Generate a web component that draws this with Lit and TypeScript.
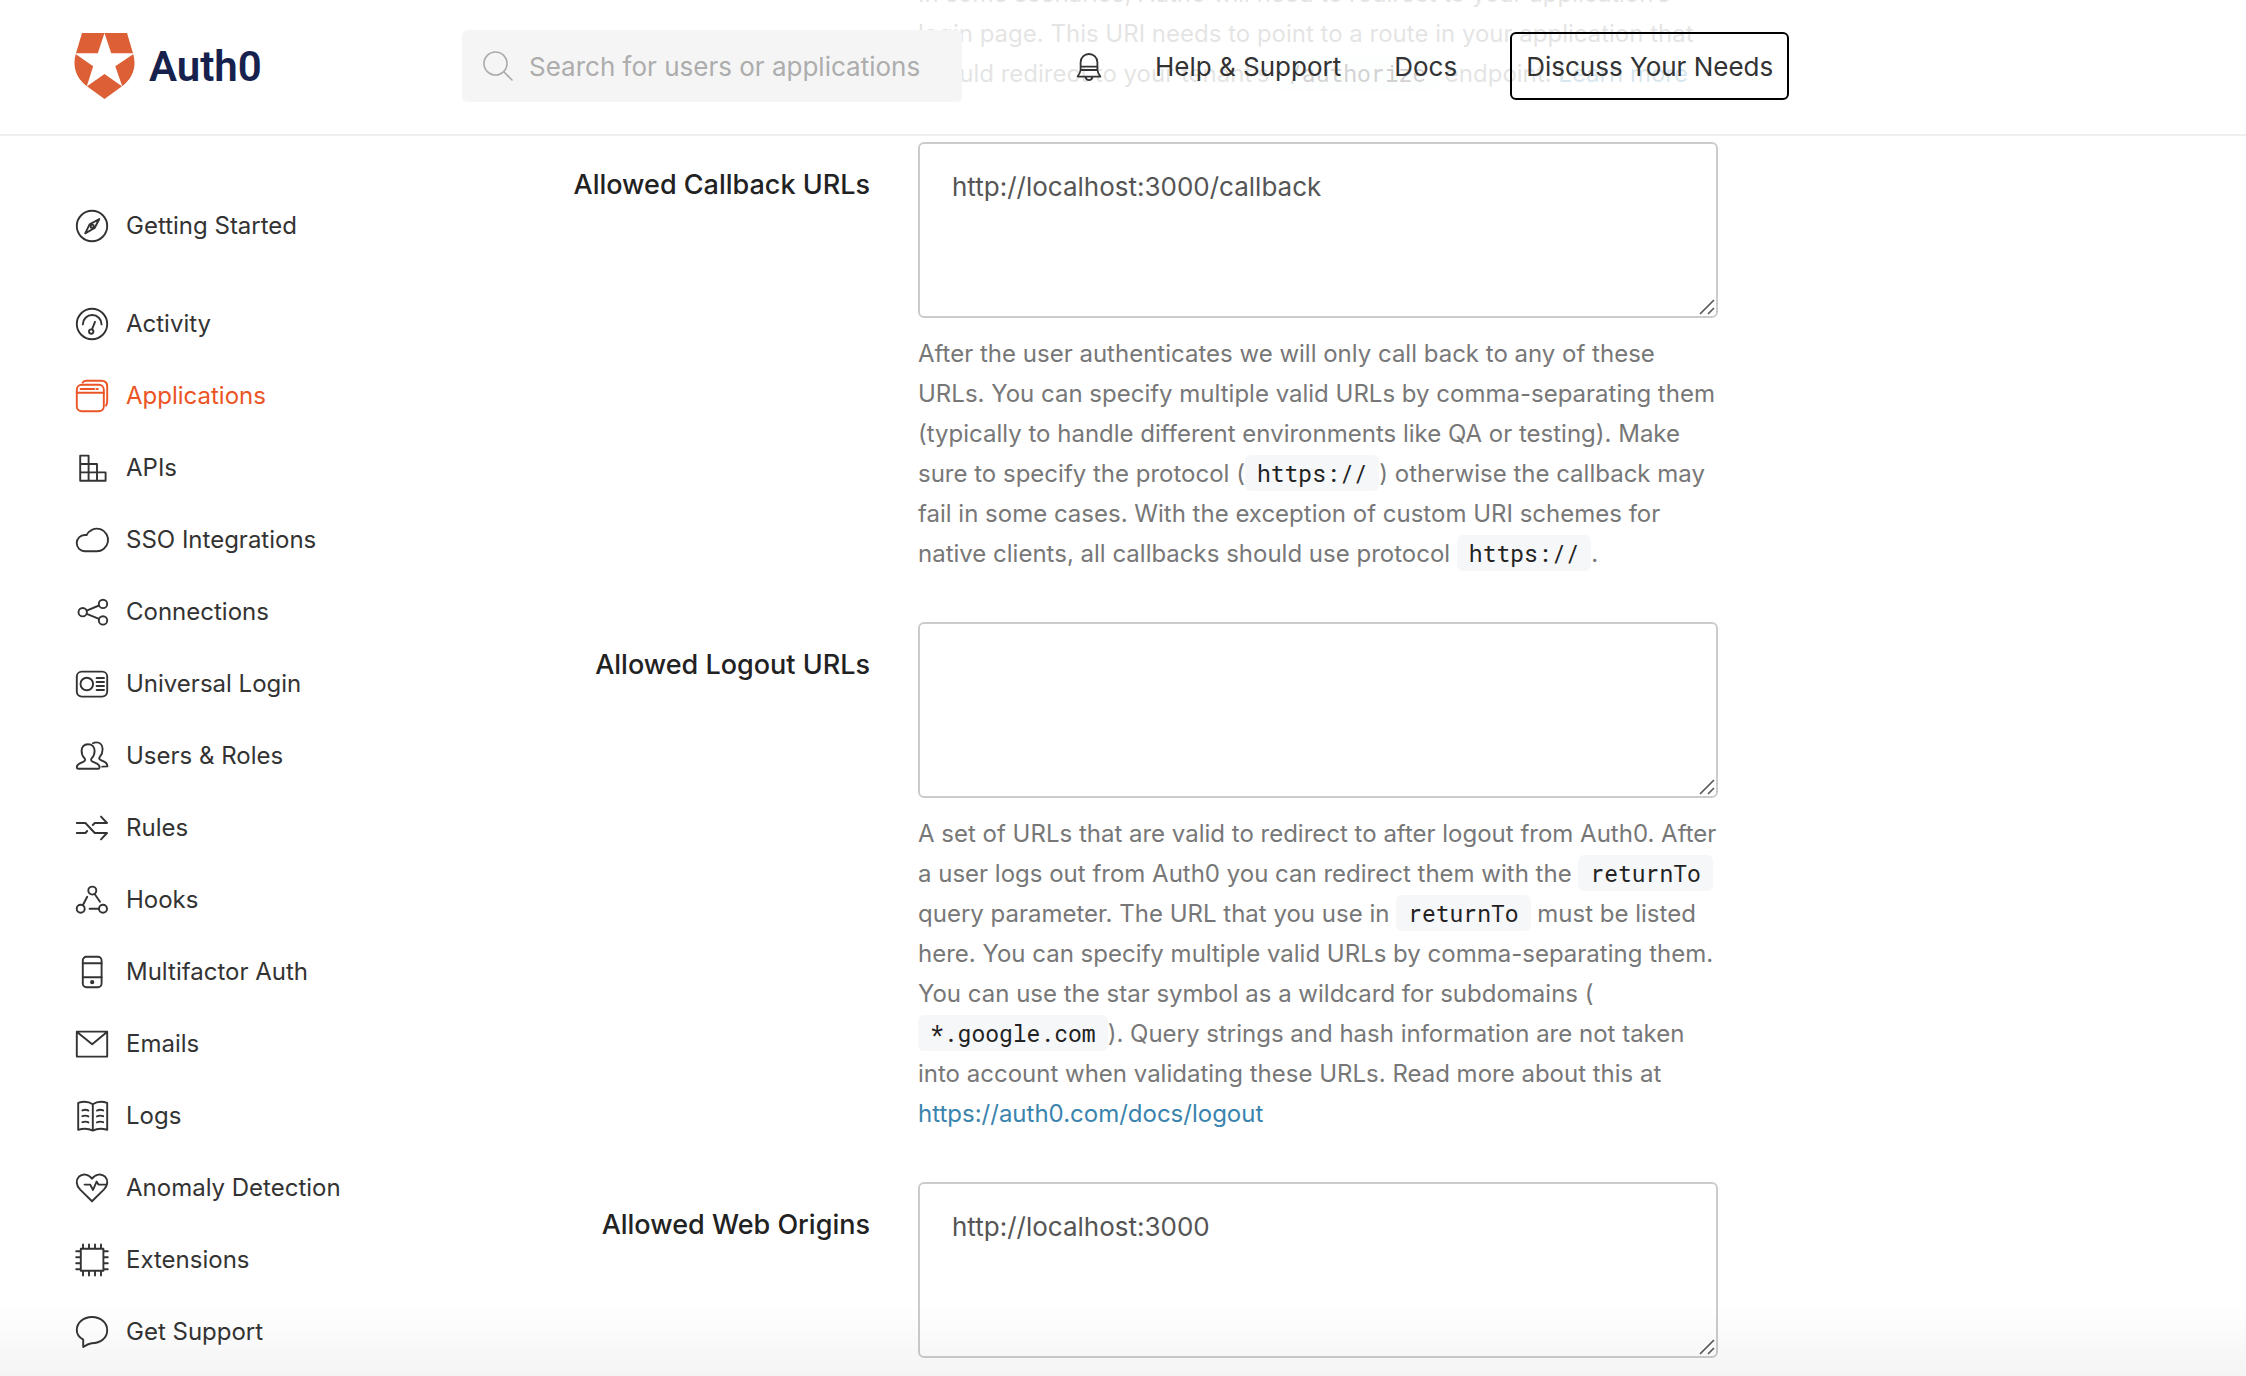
import { LitElement, html, svg, css, TemplateResult, SVGTemplateResult } from "lit";
import { customElement, property } from "lit/decorators.js";
import { classMap } from "lit/directives/class-map.js";

const ICONS: Record<string, SVGTemplateResult> = {
  compass: svg`<circle cx="16" cy="16" r="15.2"/><path d="M23.3 9 13.6 14.4 9.2 23.3 18.6 18ZM13.6 14.4l1.6.2M18.6 18l-1.4-.2"/><circle cx="16.2" cy="16.2" r="1.6"/>`,
  gauge: svg`<circle cx="16" cy="16" r="15.2"/><path d="M6.8 16.4a9.4 9.4 0 0 1 18.8 0M19 13.8 16 21.4"/><circle cx="15.2" cy="23.6" r="2.2"/>`,
  windows: svg`<rect x=".8" y="4.8" width="27" height="26.4" rx="5"/><path d="M.8 12.8h27M6.6 2.6C7.6 1.4 8.4.8 10 .8h15.4c3.6 0 5.8 2.2 5.8 5.8V21c0 2-.2 3.4-1.2 4.6"/><path d="M4.6 9h13.6M20.6 9h1.2" stroke-width="2"/>`,
  blocks: svg`<path d="M4.2 3.6h8.4v25.2H4.2zM4.2 12h16.8v16.8M4.2 20.4h25.4v8.4H4.2"/>`,
  cloud: svg`<path d="M20 27.2H8.8a8.1 8.1 0 0 1 0-16.2h1.8A11.3 11.3 0 1 1 20 27.2Z"/>`,
  share: svg`<circle cx="6.7" cy="16.2" r="4.2"/><circle cx="27" cy="7.9" r="4.2"/><circle cx="27" cy="24.4" r="4.2"/><path d="M10.7 14.6 23 9.5M10.7 17.8 23 22.8"/>`,
  card: svg`<rect x=".8" y="3.6" width="30.4" height="25" rx="5"/><circle cx="10.8" cy="16" r="6.3"/><path d="M20.6 10h7.4M20.6 14h7.4M20.6 18h7.4M20.6 22h7.4"/>`,
  users: svg`<path d="M12 4.2C7.8 4.2 5.6 7.2 5.6 11c0 3.2 1.2 5.6 2.8 7.2 1.2 1.4.8 2.6-.8 3.400L3.400 23.600C1.400 24.600.8 26 .8 27.600c0 .8.4 1.200 1.200 1.200h20.400c.8 0 1.200-.4 1.200-1.200 0-1.600-.6-3-2.600-4l-4.400-2c-1.600-.8-2-2-.8-3.400 1.600-1.600 2.800-4 2.800-7.200 0-3.800-2.400-6.800-6.600-6.800Z"/><path d="M17 3.200c1-.6 2-.8 3.200-.8 4.200 0 6.400 3 6.400 6.800 0 3-1 5.600-2.600 7.400-1.200 1.400-1 2.400.4 3.200l4.200 2c2 1 2.800 2 2.800 4.600l-5.200.2"/>`,
  shuffle: svg`<path d="M.8 11h8.6l9.400 10h12.200L25 27.400M.8 21h8.600l1.800-2M16.800 13l2-2h12.200L25 4.600"/>`,
  hooks: svg`<circle cx="16.3" cy="6.6" r="4"/><circle cx="4.7" cy="24.8" r="4"/><circle cx="27" cy="24.8" r="4"/><path d="M6.8 21.2 11.2 12.8M18.8 10.2 24 17.8M13.6 24.8H23"/>`,
  phone: svg`<rect x="6.8" y=".8" width="18.8" height="30.4" rx="3.6"/><path d="M6.8 7.2h18.8M6.8 21.2h18.8"/><circle cx="16.2" cy="26.2" r="1.2" fill="currentColor"/>`,
  mail: svg`<path d="M.8 3.6h30.4v25H.8zM1 4l15.2 12.2L31 4"/>`,
  book: svg`<path d="M16.8 4.2C13 1.6 7 1.2 2.2 2.8v27c4.8-1.4 10.6-1.2 14.6.8 4-2 9.6-2.2 14.4-.8v-27C26.4 1.2 20.6 1.6 16.8 4.2Zm0 0v26.4M6.4 10.4c2-.8 4.2-.8 6 .2M6.4 16.2c2-.8 4.2-.8 6 .2M6.4 22.2c2-.8 4.2-.8 6 .2M21 10.6c2-1 4.2-1 6.2-.2M21 16.4c2-1 4.2-1 6.2-.2M21 22.4c2-1 4.2-1 6.2-.2"/>`,
  heart: svg`<path d="M16 29.2 4.2 17.6C-.2 13-.2 7.8 2.8 4.8c3.8-3.6 9.800-3 13.200 2 3.400-5 9.400-5.600 13.200-2 3 3 3 8.200-1.400 12.800ZM8.600 12.600h5.600L17 18l3.600-8.400 2 3H31"/>`,
  chip: svg`<path d="M4.8 4.8h22.6v22H4.8zM7 .4v4.4M13 .4v4.4M19 .4v4.4M25 .4v4.4M7 27v4.6M13 27v4.6M19 27v4.6M25 27v4.6M.2 7.2h4.6M.2 13.2h4.6M.2 19.2h4.6M.2 25.2h4.6M27.4 7.2h4.4M27.4 13.2h4.4M27.4 19.2h4.4M27.4 25.2h4.4"/>`,
  chat: svg`<path d="M7.2 31v-7.4C3.2 21.4.8 18.2.8 14.2.8 6.8 7.4 1 16 1s15.2 5.6 15.2 13.2S25 27 15.6 27.2c-2.800.4-5.600 1.800-8.400 3.800Z"/>`,
};

@customElement("line-icon")
export class LineIcon extends LitElement {
  static styles = css`
    :host { display: block; flex: none; width: 32px; height: 32px; }
    .glyph { display: block; width: 100%; height: 100%; overflow: visible; }
  `;
  @property() name = "";
  render() {
    return html`<svg class="glyph" viewBox="0 0 32 32" fill="none" stroke="currentColor"
      stroke-width="1.9" stroke-linecap="round" stroke-linejoin="round" aria-hidden="true">${ICONS[this.name]}</svg>`;
  }
}

interface NavItem { icon: string; label: string; active?: boolean; lead?: boolean; }

const NAV: NavItem[] = [
  { icon: "compass", label: "Getting Started", lead: true },
  { icon: "gauge", label: "Activity" },
  { icon: "windows", label: "Applications", active: true },
  { icon: "blocks", label: "APIs" },
  { icon: "cloud", label: "SSO Integrations" },
  { icon: "share", label: "Connections" },
  { icon: "card", label: "Universal Login" },
  { icon: "users", label: "Users & Roles" },
  { icon: "shuffle", label: "Rules" },
  { icon: "hooks", label: "Hooks" },
  { icon: "phone", label: "Multifactor Auth" },
  { icon: "mail", label: "Emails" },
  { icon: "book", label: "Logs" },
  { icon: "heart", label: "Anomaly Detection" },
  { icon: "chip", label: "Extensions" },
  { icon: "chat", label: "Get Support" },
];

@customElement("app-root")
export class AppRoot extends LitElement {
  static styles = css`
    :host {
      display: block;
      position: relative;
      height: 100vh;
      overflow: hidden;
      background: #fff;
      color: #333;
      font-family: Inter, "Liberation Sans", sans-serif;
      font-size: 24px;
      line-height: 40px;
    }
    *, *::before, *::after { box-sizing: border-box; }
    a { color: inherit; text-decoration: none; }

    /* Translucent bar: the scrolled form stays faintly visible beneath it. */
    .topbar {
      position: absolute;
      inset: 0 0 auto 0;
      z-index: 2;
      display: grid;
      grid-template-columns: 388px 500px auto;
      justify-content: start;
      align-items: center;
      height: 136px;
      padding: 0 74px 2px;
      border-bottom: 2px solid #eee;
      background: rgba(255, 255, 255, 0.8);
      font-size: 26px;
    }
    .brand { display: flex; align-items: center; gap: 14px; color: #16214d; font: 600 42px/48px Roboto, sans-serif; }
    .wordmark { padding-top: 2px; }
    .shield { display: block; width: 61px; height: 66px; }
    .search { display: flex; align-items: center; gap: 16px; height: 72px; padding: 0 8px 0 21px; border-radius: 6px; background: #f5f5f5; color: #aaa; }
    .lens { flex: none; width: 30px; height: 30px; }
    .query { flex: 1; min-width: 0; padding: 2px 0 0; border: 0; outline: 0; background: none; color: #333; font: inherit; }
    .query::placeholder { color: #adadad; opacity: 1; }
    .links { display: flex; align-items: center; gap: 53px; margin-left: 114px; white-space: nowrap; }
    .menu { padding-top: 2px; }
    .bell { display: block; padding: 2px 0 0; border: 0; background: none; color: #333; }
    .bell-art { display: block; width: 26px; height: 32px; }
    .cta { height: 68px; padding: 2px 14px 0; border: 2px solid #000; border-radius: 6px; background: none; color: #333; font: inherit; }

    .page { display: grid; grid-template-columns: 384px minmax(0, 1fr); padding: 0 74px; }
    .side { padding-top: 190px; }
    .item { display: flex; align-items: center; gap: 18px; height: 72px; padding-left: 2px; }
    .item.lead { margin-bottom: 26px; }
    .item.active { color: #eb5424; }

    .form { display: grid; grid-template-columns: 412px minmax(0, 800px); column-gap: 48px; align-content: start; margin-top: -26px; }
    .label { padding-top: 23px; color: #222; font-size: 27px; font-weight: 500; text-align: right; }
    .field { margin-bottom: 48px; }
    .intro { grid-column: 2; margin-bottom: 48px; }
    .box { position: relative; height: 176px; }
    .area {
      display: block; width: 100%; height: 100%; padding: 23px 32px; resize: none; outline: 0; overflow: hidden;
      border: 2px solid #ccc; border-radius: 6px; background: #fff; color: #555; font: inherit; font-size: 26px;
    }
    .grip { position: absolute; right: 3px; bottom: 3px; width: 16px; height: 16px; color: #555; pointer-events: none; }
    .help { margin: 16px -24px 0 0; color: #777; white-space: nowrap; }
    .intro .help { margin-top: 0; }
    .code { padding: 3px 12px; border-radius: 6px; background: #f6f7f9; color: #222; font: 23px "Roboto Mono", "Liberation Mono", monospace; }
    .link { color: #3a84ad; }
    .fade { position: absolute; inset: auto 0 0 0; z-index: 3; height: 72px; background: linear-gradient(rgba(0, 0, 0, 0), rgba(0, 0, 0, 0.045)); pointer-events: none; }
  `;

  private field(id: string, label: string, value: string, help?: TemplateResult) {
    return html`
      <label class="label" for=${id}>${label}</label>
      <div class="field">
        <div class="box">
          <textarea class="area" id=${id} spellcheck="false" .value=${value}></textarea>
          <svg class="grip" viewBox="0 0 16 16" fill="none" stroke="currentColor" stroke-width="1.6" aria-hidden="true">
            <path d="M1 15 15 1M9 15l6-6" />
          </svg>
        </div>
        ${help ? html`<p class="help">${help}</p>` : null}
      </div>
    `;
  }

  render() {
    const code = (t: string) => html`<code class="code">${t}</code>`;
    return html`
      <header class="topbar">
        <a class="brand" href="#">
          <svg class="shield" viewBox="0 0 61 66" aria-hidden="true">
            <path fill="#dc5f36" d="M8 0h45l6 20.3C63 33 59 45.5 48 53.3L30.5 66 13 53.3C2 45.5-2 33 2 20.3Z" />
            <path fill="#fff" d="M30.5 0 37.2 20.3h22.2v.7L41.3 33.2 48.3 53.6 30.5 41 12.7 53.6 19.2 33.2 1.6 21v-.7h22.2Z" />
          </svg>
          <span class="wordmark">Auth0</span>
        </a>
        <label class="search">
          <svg class="lens" viewBox="0 0 30 30" fill="none" stroke="currentColor" stroke-width="1.6" stroke-linecap="round" aria-hidden="true">
            <circle cx="12.5" cy="12.5" r="11.5" /><path d="m21 21 8 8" />
          </svg>
          <input class="query" type="search" placeholder="Search for users or applications" />
        </label>
        <nav class="links">
          <button class="bell" type="button" aria-label="Notifications">
            <svg class="bell-art" viewBox="0 0 26 32" fill="none" stroke="currentColor" stroke-width="1.8" stroke-linejoin="round" aria-hidden="true">
              <path d="M4.6 16v-4.6a8.4 8.4 0 0 1 16.8 0V16M4.6 15.600h16.800M4.600 19h16.800M4.600 15.600V19C4.200 22 3 23.600 1.600 25.600h22.800C23 23.600 21.800 22 21.400 19v-3.400M9.400 25.800a3.700 4.400 0 0 0 7.200 0" />
            </svg>
          </button>
          <a class="menu" href="#">Help &amp; Support</a>
          <a class="menu" href="#">Docs</a>
          <button class="cta" type="button">Discuss Your Needs</button>
        </nav>
      </header>

      <div class="page">
        <nav class="side">
          ${NAV.map(
            (n) => html`<a href="#" class=${classMap({ item: true, active: !!n.active, lead: !!n.lead })}>
              <line-icon name=${n.icon}></line-icon><span>${n.label}</span>
            </a>`
          )}
        </nav>

        <main class="form">
          <div class="intro">
            <p class="help">
              In some scenarios, Auth0 will need to redirect to your application’s<br />
              login page. This URI needs to point to a route in your application that<br />
              should redirect to your tenant’s ${code("/authorize")} endpoint. <a class="link" href="#">Learn more</a>
            </p>
          </div>
          ${this.field("callbacks", "Allowed Callback URLs", "http://localhost:3000/callback", html`
            After the user authenticates we will only call back to any of these<br />
            URLs. You can specify multiple valid URLs by comma-separating them<br />
            (typically to handle different environments like QA or testing). Make<br />
            sure to specify the protocol (${code("https://")}) otherwise the callback may<br />
            fail in some cases. With the exception of custom URI schemes for<br />
            native clients, all callbacks should use protocol ${code("https://")}.`)}
          ${this.field("logouts", "Allowed Logout URLs", "", html`
            A set of URLs that are valid to redirect to after logout from Auth0. After<br />
            a user logs out from Auth0 you can redirect them with the ${code("returnTo")}<br />
            query parameter. The URL that you use in ${code("returnTo")} must be listed<br />
            here. You can specify multiple valid URLs by comma-separating them.<br />
            You can use the star symbol as a wildcard for subdomains (<br />
            ${code("*.google.com")}). Query strings and hash information are not taken<br />
            into account when validating these URLs. Read more about this at<br />
            <a class="link" href="#">https://auth0.com/docs/logout</a>`)}
          ${this.field("origins", "Allowed Web Origins", "http://localhost:3000")}
        </main>
      </div>
      <div class="fade"></div>
    `;
  }
}
